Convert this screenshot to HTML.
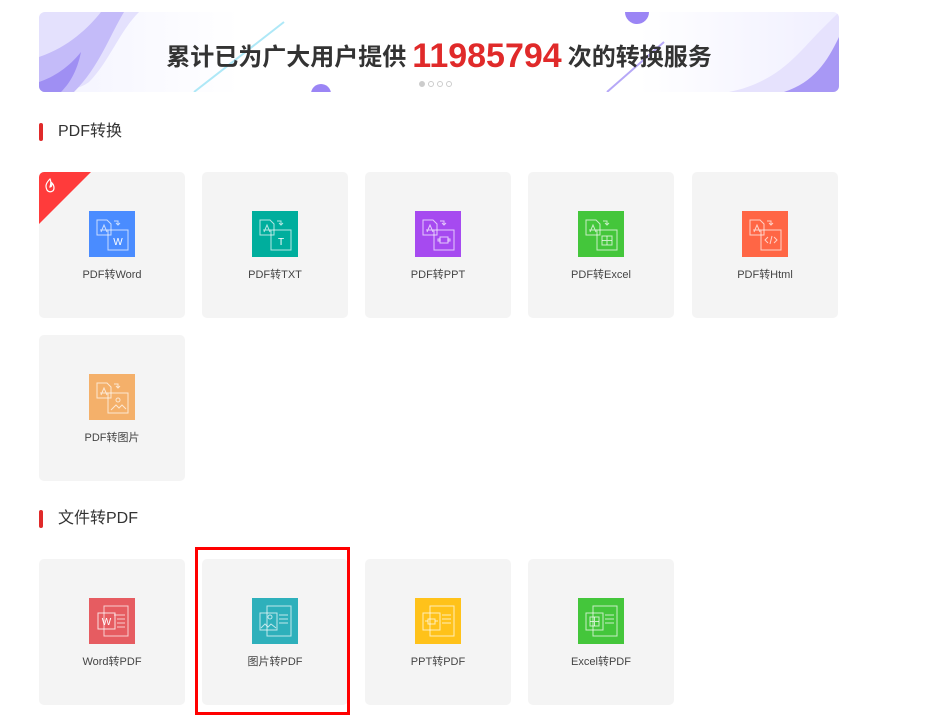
<!DOCTYPE html>
<html><head><meta charset="utf-8">
<style>
*{margin:0;padding:0;box-sizing:border-box}
body{width:941px;height:716px;background:#fff;font-family:"Liberation Sans","Noto Sans CJK SC",sans-serif;position:relative;overflow:hidden}
.banner{position:absolute;left:39px;top:12px;width:800px;height:80px;border-radius:6px;overflow:hidden;background:linear-gradient(90deg,#f3f3ff 0%,#fff 25%,#fff 75%,#f0efff 100%)}
.banner .t{position:absolute;left:0;right:0;top:24px;text-align:center;font-size:24px;font-weight:bold;color:#333;line-height:40px}
.banner .t b{color:#e02a2a;font-size:34px;vertical-align:-2px;margin:0 6px}
.dots{position:absolute;left:380px;top:69px;display:flex;gap:3px}
.dots i{width:6px;height:6px;border-radius:50%;border:1px solid #ccc;display:block}
.dots i:first-child{background:#ccc}
.h{position:absolute;left:39px;font-size:16px;color:#333;height:20px;line-height:20px}
.h:before{content:"";position:absolute;left:0;top:1px;width:4px;height:18px;background:#e02a2a;border-radius:2px}
.h span{margin-left:19px}
.card{position:absolute;width:146px;height:146px;background:#f4f4f4;border-radius:5px;overflow:hidden}
.card svg{position:absolute;left:50px;top:39px}
.card .l{position:absolute;left:0;right:0;top:94px;text-align:center;font-size:11px;color:#444}
.hot{position:absolute;left:0;top:0;width:0;height:0;border-top:52px solid #ff3b3b;border-right:52px solid transparent}
.box{position:absolute;left:195px;top:547px;width:155px;height:168px;border:3px solid #f00}
</style></head><body>
<div class="banner">
 <svg width="800" height="80" style="position:absolute;left:0;top:0">
  <path d="M0 0 H100 C80 20 70 50 50 70 C40 78 20 80 0 80Z" fill="#e4e1fd"/>
  <path d="M0 45 C30 35 50 15 62 0 H85 C70 25 60 55 35 80 H0Z" fill="#c4bbf9"/>
  <path d="M0 70 C15 65 30 55 42 40 C38 60 30 72 22 80 H0Z" fill="#9f8ff3"/>
  <path d="M155 80 L245 10" stroke="#aee8f7" stroke-width="2"/>
  <circle cx="598" cy="0" r="12" fill="#9b85f5"/>
  <circle cx="282" cy="82" r="10" fill="#9b85f5"/>
  <path d="M568 80 L625 30" stroke="#b6a8f7" stroke-width="2"/>
  <path d="M800 0 V80 H690 C740 70 760 40 780 20 C790 10 795 5 800 0Z" fill="#e6e2fd"/>
  <path d="M800 25 V80 H745 C775 70 788 50 800 25Z" fill="#a898f5"/>
 </svg>
 <div class="t">累计已为广大用户提供<b>11985794</b>次的转换服务</div>
 <div class="dots"><i></i><i></i><i></i><i></i></div>
</div>

<div class="h" style="top:122px"><span>PDF转换</span></div>
<div class="h" style="top:509px"><span>文件转PDF</span></div>

<div class="card" style="left:39px;top:172px"><div class="hot"></div>
 <svg style="left:4px;top:6px" width="14" height="16" viewBox="0 0 14 16"><path d="M7 1 C3 5 2 8 4 12 C6 15 11 14 11 10 C11 8 10 6 9 5 C9 8 8 9 7 9 C8 6 8 3 7 1Z" fill="none" stroke="#fff" stroke-width="1.2"/></svg>
 <svg width="46" height="46" viewBox="0 0 46 46"><rect width="46" height="46" fill="#4a8cff"/><g fill="none" stroke="#fff" stroke-opacity=".7" stroke-width="1"><path d="M8 9h10l4 4v11H8z"/><path d="M12 21l3-7 3 7M11 19h8"/><path d="M25 10h4v4m-2-2l2 2 2-2"/><rect x="19" y="19" width="20" height="20"/></g><text x="29" y="34" font-size="10" fill="#fff" text-anchor="middle" font-family="Liberation Sans">W</text></svg>
 <div class="l">PDF转Word</div></div>

<div class="card" style="left:202px;top:172px">
 <svg width="46" height="46" viewBox="0 0 46 46"><rect width="46" height="46" fill="#00ae9d"/><g fill="none" stroke="#fff" stroke-opacity=".7"><path d="M8 9h10l4 4v11H8z"/><path d="M12 21l3-7 3 7M11 19h8"/><path d="M25 10h4v4m-2-2l2 2 2-2"/><rect x="19" y="19" width="20" height="20"/></g><text x="29" y="34" font-size="10" fill="#fff" text-anchor="middle" font-family="Liberation Sans">T</text></svg>
 <div class="l">PDF转TXT</div></div>

<div class="card" style="left:365px;top:172px">
 <svg width="46" height="46" viewBox="0 0 46 46"><rect width="46" height="46" fill="#a64af0"/><g fill="none" stroke="#fff" stroke-opacity=".7"><path d="M8 9h10l4 4v11H8z"/><path d="M12 21l3-7 3 7M11 19h8"/><path d="M25 10h4v4m-2-2l2 2 2-2"/><rect x="19" y="19" width="20" height="20"/><rect x="25" y="26" width="8" height="6"/><path d="M23 28h2v2h-2zM33 28h2v2h-2z"/></g></svg>
 <div class="l">PDF转PPT</div></div>

<div class="card" style="left:528px;top:172px">
 <svg width="46" height="46" viewBox="0 0 46 46"><rect width="46" height="46" fill="#44c63b"/><g fill="none" stroke="#fff" stroke-opacity=".7"><path d="M8 9h10l4 4v11H8z"/><path d="M12 21l3-7 3 7M11 19h8"/><path d="M25 10h4v4m-2-2l2 2 2-2"/><rect x="19" y="19" width="20" height="20"/><rect x="24" y="25" width="10" height="9"/><path d="M29 25v9M24 29.5h10"/></g></svg>
 <div class="l">PDF转Excel</div></div>

<div class="card" style="left:692px;top:172px">
 <svg width="46" height="46" viewBox="0 0 46 46"><rect width="46" height="46" fill="#ff6645"/><g fill="none" stroke="#fff" stroke-opacity=".7"><path d="M8 9h10l4 4v11H8z"/><path d="M12 21l3-7 3 7M11 19h8"/><path d="M25 10h4v4m-2-2l2 2 2-2"/><rect x="19" y="19" width="20" height="20"/><path d="M26 26l-3 3 3 3M32 26l3 3-3 3M30 25l-2 8"/></g></svg>
 <div class="l">PDF转Html</div></div>

<div class="card" style="left:39px;top:335px">
 <svg width="46" height="46" viewBox="0 0 46 46"><rect width="46" height="46" fill="#f4b06a"/><g fill="none" stroke="#fff" stroke-opacity=".7"><path d="M8 9h10l4 4v11H8z"/><path d="M12 21l3-7 3 7M11 19h8"/><path d="M25 10h4v4m-2-2l2 2 2-2"/><rect x="19" y="19" width="20" height="20"/><circle cx="29" cy="26" r="2"/><path d="M22 36l5-5 3 3 3-3 4 4"/></g></svg>
 <div class="l">PDF转图片</div></div>

<div class="card" style="left:39px;top:559px">
 <svg width="46" height="46" viewBox="0 0 46 46"><rect width="46" height="46" fill="#e65c61"/><g fill="none" stroke="#fff" stroke-opacity=".7"><rect x="15" y="8" width="24" height="30"/><path d="M25 17h11M28 21h8M28 25h8M28 29h8"/></g><rect x="9" y="15" width="17" height="16" fill="none" stroke="#fff" stroke-opacity=".8"/><text x="17.5" y="27" font-size="10" fill="#fff" text-anchor="middle" font-family="Liberation Sans">W</text></svg>
 <div class="l">Word转PDF</div></div>

<div class="card" style="left:202px;top:559px">
 <svg width="46" height="46" viewBox="0 0 46 46"><rect width="46" height="46" fill="#2eb0bb"/><g fill="none" stroke="#fff" stroke-opacity=".7"><rect x="15" y="8" width="24" height="30"/><path d="M27 17h9M27 21h9M27 25h9"/><rect x="8" y="15" width="17" height="17"/><circle cx="18" cy="19" r="2"/><path d="M9 30l4-4 3 3 3-3 5 4"/></g></svg>
 <div class="l">图片转PDF</div></div>

<div class="card" style="left:365px;top:559px">
 <svg width="46" height="46" viewBox="0 0 46 46"><rect width="46" height="46" fill="#ffc21a"/><g fill="none" stroke="#fff" stroke-opacity=".7"><rect x="15" y="8" width="24" height="30"/><path d="M27 17h9M27 21h9M27 25h9"/><rect x="8" y="15" width="17" height="17"/><rect x="13" y="21" width="7" height="5"/><path d="M10 23h3M20 23h3"/></g></svg>
 <div class="l">PPT转PDF</div></div>

<div class="card" style="left:528px;top:559px">
 <svg width="46" height="46" viewBox="0 0 46 46"><rect width="46" height="46" fill="#44c63b"/><g fill="none" stroke="#fff" stroke-opacity=".7"><rect x="15" y="8" width="24" height="30"/><path d="M27 17h9M27 21h9M27 25h9"/><rect x="8" y="15" width="17" height="17"/><rect x="12" y="19" width="9" height="9"/><path d="M16.5 19v9M12 23.5h9"/></g></svg>
 <div class="l">Excel转PDF</div></div>

<div class="box"></div>
</body></html>
